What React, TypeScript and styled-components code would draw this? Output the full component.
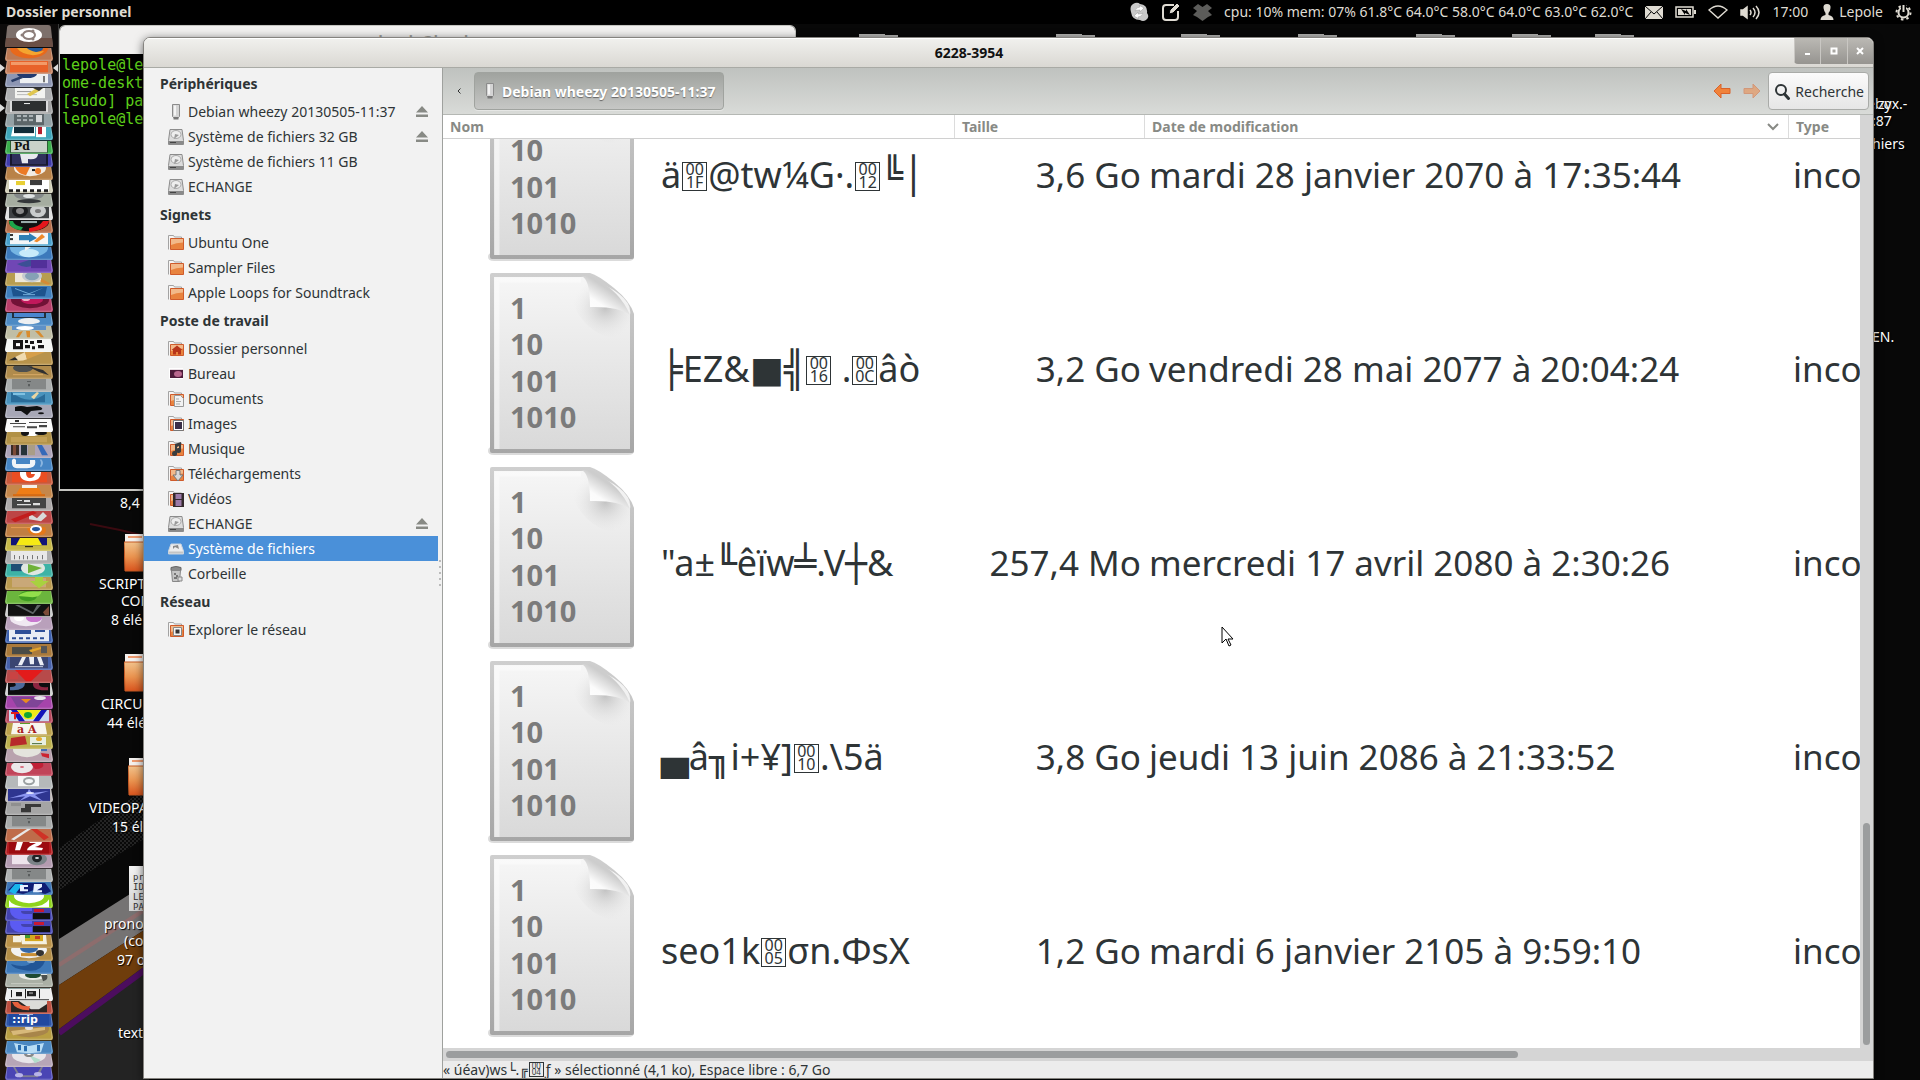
import React from 'react';
import styled, { createGlobalStyle, css } from 'styled-components';

const ui = `'Noto Sans', 'DejaVu Sans', sans-serif`;
const ink = '#2e3436';

const GlobalStyle = createGlobalStyle`
  *, *::before, *::after { box-sizing: border-box; }
  body { margin: 0; background: #080808; color: ${ink}; font-family: ${ui}; font-size: 14px; }
  button { font: inherit; color: inherit; border: 0; padding: 0; margin: 0; background: none; }
  ul { list-style: none; margin: 0; padding: 0; }
  svg { display: block; flex: none; }
`;

/* ---------- Screen ---------- */

const Screen = styled.div`
  height: 100vh;
  display: grid;
  grid-template-rows: 24px minmax(0, 1fr);
  overflow: hidden;
`;

const Panel = styled.header`
  background: #000;
  color: #dfdbd2;
  display: flex;
  align-items: center;
  justify-content: space-between;
  padding: 0 8px 0 6px;
  line-height: 24px;
`;

const PanelTitle = styled.strong`
  font-size: 14px;
`;

const Indicators = styled.div`
  display: flex;
  align-items: center;
  gap: 12px;
`;

const Indicator = styled.button`
  display: flex;
  align-items: center;
  gap: 5px;
  white-space: nowrap;
`;

const Stage = styled.main`
  display: grid;
  grid-template-columns: 59px minmax(0, 1fr);
  position: relative;
  min-height: 0;
  overflow: hidden;
`;

/* ---------- Launcher ---------- */

type Mark = [string, string];

const r = (x: number, y: number, w: number, h: number) => `M${x} ${y}h${w}v${h}h${-w}z`;
const o = (x: number, y: number, a: number, b: number) =>
  `M${x - a} ${y}a${a} ${b} 0 1 0 ${2 * a} 0a${a} ${b} 0 1 0 ${-2 * a} 0z`;

const drive: Mark[] = [['#858888', r(7, 0, 34, 10)], ['#5a5d5d', r(22, 2, 4, 1)], ['#5a5d5d', r(23, 5, 2, 2)]];

type Tile = { tint: string; marks: Mark[]; label?: [string, string, number, number, number] };

const tiles: Tile[] = [
  { tint: '#bd7a55', marks: [['#e8691c', o(24, 0, 19, 10)], ['#245a9c', o(26, 0, 12, 5)], ['#f4a530', 'M12 0q4 6 16 7q8 0 11-4l-8 1q-8-2-10-5z']] },
  { tint: '#c4805f', marks: [['#e8622a', r(5, 0, 38, 11)], ['#f39a68', r(6, 1, 36, 3)]] },
  { tint: '#8d96b3', marks: [['#eef0f2', r(15, 0, 28, 9)], ['#223a70', o(22, 0, 10, 4)], ['#2b3d66', 'M6 6l10-4 2 2-11 4z'], ['#777', r(38, 2, 2, 6)]] },
  { tint: '#b0b1b3', marks: [['#f3f3f1', r(10, 0, 30, 10)], ['#999', r(12, 3, 14, 1)], ['#bbb', r(12, 6, 20, 1)], ['#e0c64f', 'M22 6l10-6 4 2-11 6z'], ['#333', 'M28 0h10l-4 3z']] },
  { tint: '#a2a2a2', marks: [['#dcdcdc', r(5, 0, 38, 11)], ['#2d2f30', r(7, 0, 34, 10)], ['#eee', r(19, 2, 6, 1)]] },
  { tint: '#94a1a5', marks: [['#5c6669', r(9, 0, 30, 11)], ['#aab2b5', r(12, 1, 4, 2)], ['#aab2b5', r(18, 1, 4, 2)], ['#aab2b5', r(24, 1, 4, 2)], ['#aab2b5', r(12, 5, 4, 2)], ['#aab2b5', r(18, 5, 4, 2)], ['#aab2b5', r(24, 5, 4, 2)], ['#d6d9da', r(31, 1, 6, 7)]] },
  { tint: '#3fa6ba', marks: [['#fff', 'M6 9L8 0h22v9z'], ['#122c38', r(9, 0, 20, 6)], ['#fff', r(31, 0, 10, 10)], ['#b51f2c', r(33, 0, 4, 7)]] },
  { tint: '#3aae4c', marks: [['#2b5f33', r(5, 0, 38, 12)], ['#c9d2ca', r(6, 0, 36, 11)]], label: ['Pd', '#111', 9, 9, 11] },
  { tint: '#403cab', marks: [['#17172e', r(5, 0, 38, 12)], ['#30305c', r(7, 0, 34, 10)], ['#e8e8ee', 'M15 0h18q0 6-10 5v4h-6z']] },
  { tint: '#b98248', marks: [['#f2ece4', o(25, 1, 16, 8)], ['#ec7a25', 'M10 0h15l-4 8q-8-1-11-8z'], ['#ec7a25', o(33, 4, 3, 3)], ['#222', r(27, 2, 3, 2)]] },
  { tint: '#d2cfb8', marks: [['#fff', r(4, 0, 40, 11)], ['#3c3c3c', r(25, 0, 12, 5)], ['#e8cf35', r(11, 1, 9, 4)], ['#1b1b1b', 'M4 9h4v3H4zM11 9h4v3h-4zM18 9h4v3h-4zM25 9h4v3h-4zM32 9h4v3h-4zM39 9h4v3h-4z']] },
  { tint: '#a5ada0', marks: [['#84898a', o(24, 0, 15, 6)], ['#34383a', o(24, 7, 12, 2)], ['#dfe3e3', o(24, 2, 6, 2)]] },
  { tint: '#e0e0e0', marks: [['#3f4244', r(4, 0, 40, 11)], ['#1c1e1f', o(15, 4, 8, 6)], ['#c9cccc', o(33, 4, 8, 6)], ['#888', o(15, 4, 4, 3)], ['#777', o(33, 4, 3, 2)]] },
  { tint: '#b86f4b', marks: [['#111', o(24, 2, 20, 9)], ['#1da64b', 'M4 1q0 8 12 9l2-3q-9-1-10-6z'], ['#e6161b', 'M44 1q-1 8-20 11v-4q10-1 14-7z'], ['#9aa', r(16, 1, 16, 2)]] },
  { tint: '#48a0cc', marks: [['#f4f6f7', r(5, 0, 38, 11)], ['#333', r(5, 1, 3, 2)], ['#333', r(5, 5, 3, 2)], ['#2e7fb5', 'M14 2h10V0l8 5-8 4V7H14z'], ['#ef8a2b', 'M29 8l8-7 3 3-8 5z']] },
  { tint: '#3c79bb', marks: [['#75b5e3', o(24, 1, 19, 9)], ['#c8ebfa', o(24, 6, 10, 4)], ['#f0f0f0', 'M20 0h6l-6 4z']] },
  { tint: '#7047b5', marks: [['#3c4f95', 'M12 4l12-4h6v5q-10 4-18-1z'], ['#523099', r(26, 0, 16, 8)]] },
  { tint: '#b79d50', marks: [['#eee8d8', r(10, 0, 26, 9)], ['#c6cbd0', o(27, 3, 10, 6)], ['#85a1b5', o(27, 3, 7, 4)], ['#d48a35', 'M37 6l8 4-2 2-8-4z']] },
  { tint: '#3f7fbd', marks: [['#1d538d', 'M6 1h36l-2 9H8z'], ['#73aedb', 'M10 2l14 5 14-5-2 1-12 5L10 3z'], ['#73aedb', r(18, 8, 12, 1)]] },
  { tint: '#b93f6a', marks: [['#711236', o(25, 1, 19, 8)], ['#c1185b', o(27, 1, 11, 4)], ['#efb0c3', o(21, 0, 4, 2)]] },
  { tint: '#4d8ac4', marks: [['#222f3d', r(7, 0, 34, 5)], ['#4a86cf', r(9, 0, 30, 4)], ['#eef0f2', o(24, 8, 11, 3)]] },
  { tint: '#c0bea6', marks: [['#5f91c7', r(7, 0, 34, 4)], ['#fff', o(20, 2, 9, 2)], ['#d88c2f', 'M21 5h4v6h-3zM14 6l4-1-4 6h-3zM30 5h4l5 6h-3z']] },
  { tint: '#f4f6f4', marks: [['#161616', 'M8 1h10v9H8zM20 1h3v3h-3zM25 2h4v3h-4zM32 1h5v3h-5zM20 6h5v3h-5zM27 7h3v3h-3zM33 6h6v3h-6z'], ['#fff', r(11, 4, 4, 3)]] },
  { tint: '#b8934b', marks: [['#f0dbb0', 'M6 7L20 0l2 7q-8 3-16 0z'], ['#282828', 'M4 8l6-3 3 3z'], ['#d69f4a', 'M20 0h20l-18 7z']] },
  { tint: '#b08b4c', marks: [['#4c4f50', o(18, 2, 10, 4)], ['#2f2f30', 'M22 0l16 4 6 5-10-3z'], ['#d6a965', r(8, 8, 30, 1)]] },
  { tint: '#adb0b0', marks: drive },
  { tint: '#4a93bd', marks: [['#2a6b98', 'M6 0q18 14 34 2v8H6z'], ['#ead5a2', 'M26 5l6-5 2 1-5 6z'], ['#7fc1e2', r(8, 1, 12, 2)]] },
  { tint: '#a7a7b6', marks: [['#101112', 'M10 2q6-2 12 0l10-1q8 2 4 4l-10 1-4 4-6-4-6 0z'], ['#101112', o(36, 8, 3, 1)]] },
  { tint: '#fbfbfb', marks: [['#444', 'M5 4h16v1H5zM8 7h12v1H8zM24 3h18v1H24zM22 7h10v2H22zM34 6h8v2h-8z'], ['#333', r(10, 1, 4, 2)]] },
  { tint: '#b19146', marks: [['#fff', o(26, 1, 9, 3)], ['#141414', o(20, 1, 4, 3)], ['#141414', o(36, 1, 6, 2)], ['#c2a057', r(6, 5, 36, 5)]] },
  { tint: '#ada3b8', marks: [['#3a2c26', r(6, 0, 8, 10)], ['#7d4a37', r(8, 0, 3, 10)], ['#273338', r(16, 0, 6, 10)], ['#a99d87', r(23, 0, 7, 10)], ['#3669b9', 'M32 0l5-0 6 10h-6z']] },
  { tint: '#4685c4', marks: [['#f0f4f8', 'M7 2q2-3 4 0v4h14V2h5q2 8-8 8H12q-6 0-5-8z'], ['#8cb6e0', 'M36 1q4 4 0 8l-1-1q2-3 0-6z']] },
  { tint: '#c9593b', marks: [['#ea4e23', r(7, 0, 35, 10)], ['#fff', 'M15 0h6q0 6 4 6t5-4h-4V0h10q0 9-11 9T15 0z']] },
  { tint: '#c5874b', marks: [['#f4f0e8', r(17, 0, 15, 3)], ['#ef7d16', 'M15 3h19l3 6H11z'], ['#d86a10', r(8, 9, 32, 2)]] },
  { tint: '#aeaaaa', marks: [['#444', r(7, 0, 34, 10)], ['#ddd', 'M12 2h5v1h-5zM19 2h6v2h-6zM12 6h14v1H12zM28 5h7v2h-7z']] },
  { tint: '#bd4545', marks: [['#d9d9d9', 'M24 2l8 5 6-6 4 4-6 5-12-2z'], ['#c21d1d', 'M6 8l22-8 4 2-22 9z']] },
  { tint: '#c07e42', marks: [['#e3781a', 'M22 3h18q4 9-10 8-8-1-8-8z'], ['#fff', o(31, 5, 6, 4)], ['#26559f', o(31, 5, 4, 2)], ['#e59852', r(6, 3, 20, 1)]] },
  { tint: '#c7b949', marks: [['#111478', r(6, 0, 36, 7)], ['#f5e914', 'M15 0h18l4 7H11z'], ['#111', r(20, 8, 8, 1)]] },
  { tint: '#acacac', marks: [['#e8e8e8', r(6, 0, 36, 9)], ['#777', 'M9 4h1v4H9zM14 5h1v3h-1zM18 4h1v4h-1zM22 5h1v3h-1zM27 4h1v4h-1zM32 5h1v3h-1zM37 4h1v4h-1z']] },
  { tint: '#3db3a6', marks: [['#1f4e74', r(6, 0, 14, 7)], ['#dfe7e2', o(28, 4, 12, 7)], ['#6fb23a', 'M23 0l14 4-14 5z']] },
  { tint: '#bb9b50', marks: [['#c9a878', r(7, 1, 34, 9)], ['#a8d13f', 'M30 0h8v4h6l-10 7-9-7h5z']] },
  { tint: '#6bb53d', marks: [['#3f9a22', o(23, 5, 9, 5)], ['#92df4b', 'M13 5q6-6 20-4l4-1q-2 7-12 6z']] },
  { tint: '#c7c7c7', marks: [['#121212', r(3, 0, 42, 12)], ['#5f6466', 'M10 1l18 9 8-9h-4l-4 7L14 1z'], ['#7b4a38', 'M38 8l6-6v9h-4z']] },
  { tint: '#b9a0bb', marks: [['#f0e8f2', o(21, 1, 16, 8)], ['#c878cf', o(29, 1, 8, 4)], ['#fff', o(14, 1, 5, 3)]] },
  { tint: '#3b5fae', marks: [['#e8ecf4', 'M4 0h40v11H4z'], ['#2e4f98', 'M10 0h16v4H10zM30 0h10v2H30zM7 7h4v2H7zM14 7h4v2h-4zM21 7h4v2h-4zM28 7h4v2h-4zM35 7h4v2h-4z']] },
  { tint: '#ab7a3b', marks: [['#4a4b46', r(7, 3, 20, 7)], ['#e2a52c', 'M24 6l8-2 4-1v2l-10 3z'], ['#555', r(36, 2, 6, 7)]] },
  { tint: '#4761aa', marks: [['#3a4572', r(5, 0, 38, 11)], ['#eceef5', 'M17 0h4l-4 8h-4zM24 0h5v7h-4zM32 0h4l3 8h-4z'], ['#c9cfe6', r(10, 9, 28, 1)]] },
  { tint: '#b74a4a', marks: [['#e31b1b', 'M10 0h28L26 11h-5z'], ['#c94343', r(5, 2, 8, 7)]] },
  { tint: '#cfcfcf', marks: [['#0d0d0f', r(3, 0, 42, 12)], ['#4c6a9b', 'M10 0h10q0 8-15 7V4q8 0 5-4z'], ['#8c2540', 'M28 0h6q-1 5 9 4v3q-16 1-15-7z']] },
  { tint: '#a644ab', marks: [['#7f4597', 'M6 1h36l-10 10H12z'], ['#e7e2ea', o(35, 2, 6, 2)], ['#e98b20', 'M16 3l10 0-5 4z']] },
  { tint: '#b8475c', marks: [['#c9d8ef', r(4, 0, 40, 11)], ['#1414b8', 'M6 0h6l8 11h-6zM42 0h-6l-8 11h6z'], ['#f1e916', 'M12 0h24l-8 9h-8z'], ['#e01e1e', 'M6 2h8v2h-3v5H9V4H6z'], ['#10a532', o(23, 5, 4, 3)]] },
  { tint: '#bca14b', marks: [['#f7f5ee', 'M8 0h32l2 11H6z'], ['#5b9b2a', r(15, 0, 10, 1)]], label: ['a A', '#a81d1d', 12, 10, 11] },
  { tint: '#bdb14e', marks: [['#b72a2a', 'M6 2l14-2 2 8-17 2z'], ['#e7efe2', r(25, 1, 16, 8)], ['#e5a92b', o(34, 3, 3, 2)], ['#476b3a', r(27, 7, 10, 1)]] },
  { tint: '#b9a2ae', marks: [['#e4e4dd', o(22, 1, 14, 7)], ['#446fb5', r(36, 0, 6, 2)], ['#cc2430', 'M36 4l8 1v4l-7-2z']] },
  { tint: '#c14459', marks: [['#ece8ea', o(17, 4, 11, 6)], ['#d86a7c', o(17, 4, 2, 1)], ['#c02036', 'M26 0h12q2 6-8 6z']] },
  { tint: '#b5b9ba', marks: [['#f6f8f8', r(13, 0, 21, 10)], ['#9ba1a2', o(24, 5, 6, 4)], ['#f6f8f8', o(24, 5, 4, 2)]] },
  { tint: '#bcb6b6', marks: [['#2e3590', r(3, 0, 42, 12)], ['#8c96f0', 'M4 9l18-5 2-4 3 4 17-2-14 4 8 6-13-5-11 5 6-5z'], ['#dfe3ff', o(25, 4, 4, 1)]] },
  { tint: '#a5a5a5', marks: [['#383838', 'M20 2h16v3H26v5H16V6h4z'], ['#8f8f8f', r(6, 1, 10, 3)]] },
  { tint: '#a9abab', marks: drive },
  { tint: '#bf6c4a', marks: [['#e8e8e8', 'M6 10L22 0h4L9 11z'], ['#cf3226', 'M26 0l6-0 12 8-5 3z']] },
  { tint: '#b3191d', marks: [['#9c0b10', r(4, 0, 40, 12)], ['#fff', 'M12 0h6l-3 8h-5zM24 0h13q0 3-7 5l8 1-1 2H22q0-3 9-7h-6z']] },
  { tint: '#b49bb0', marks: [['#eee4ec', r(7, 0, 24, 9)], ['#7b8388', o(32, 4, 10, 6)], ['#1f2427', o(32, 3, 5, 4)], ['#d7dde0', o(32, 3, 2, 1)]] },
  { tint: '#b0b2b2', marks: drive },
  { tint: '#3c74b5', marks: [['#0f1c74', 'M3 8L10 1h30l6 8-6 3-12-4-10 4z'], ['#19b4ea', 'M4 9L10 2h8l-8 10z'], ['#e6efff', 'M15 3h8v2h-4v2h4v2h-8zM29 2h8v3l-5 3h5v2h-9z']] },
  { tint: '#8fd41c', marks: [['#fff', r(4, 0, 40, 12)], ['#8fd41c', 'M3 0h42v3q-5 9-21 9T3 4z'], ['#fff', o(24, 1, 15, 7)]] },
  { tint: '#4343ad', marks: [['#5b5bf2', 'M5 0h22v3H16q0 3 4 3h7v5H14Q4 9 5 0z'], ['#111', 'M28 5h17v6H28z'], ['#c81932', r(29, 1, 10, 3)]] },
  { tint: '#4343ad', marks: [['#5b5bf2', 'M5 0h22v3H16q0 3 4 3h7v5H14Q4 9 5 0z'], ['#111', 'M28 5h17v6H28z'], ['#c81932', r(29, 1, 10, 3)]] },
  { tint: '#bb9249', marks: [['#f4f0e0', 'M8 1l8-1v7H8zM15 0h26l1 9H17z'], ['#d4a81f', r(20, 0, 18, 6)], ['#3f9a32', r(20, 0, 5, 3)], ['#c43c1e', r(30, 1, 5, 3)]] },
  { tint: '#b48e48', marks: [['#f2f2f2', o(24, 2, 18, 8)], ['#3568a8', o(24, 0, 9, 5)], ['#c98f35', r(16, 5, 16, 3)], ['#333', o(35, 5, 4, 3)]] },
  { tint: '#3d78b8', marks: [['#225596', 'M6 3q16 5 22-3h12q-4 12-20 9-12-1-14-6z'], ['#8badcf', o(26, 0, 4, 2)]] },
  { tint: '#aab0a5', marks: [['#e9ece8', o(28, 1, 14, 5)], ['#1e4a33', o(28, 1, 8, 3)], ['#4c504d', 'M36 1h6q2 5-4 6z'], ['#c8ccc4', r(6, 9, 32, 1)]] },
  { tint: '#f0f0f0', marks: [['#8ba1a1', r(3, 0, 42, 1)], ['#222', 'M6 2h1v7H6zM20 1h1v9h-1zM34 1h1v9h-1zM11 4h6v4h-6zM22 3h9v5h-9zM4 11h40v1H4z'], ['#777', r(24, 4, 4, 2)]] },
  { tint: '#bd4f3f', marks: [['#2a2523', r(6, 0, 36, 11)], ['#dcdcd8', 'M14 0h28v3l-8 5h-8z'], ['#e65f3c', 'M7 1h6q3 5 12 4l-1 4Q10 9 7 1z']] },
  { tint: '#2d55a9', marks: [['#2149a0', r(4, 0, 40, 12)], ['#a9bbe0', r(14, 0, 14, 1)]], label: ['::rip', '#fff', 7, 9, 11] },
  { tint: '#b99e43', marks: [['#a8854a', o(24, 2, 20, 8)], ['#d8b97a', 'M6 4l34-4v3L8 8z'], ['#e5e0d8', o(24, 1, 4, 2)]] },
  { tint: '#4a87c1', marks: [['#b8ddf5', 'M9 2l15 3 15-3-3 9-12 1-12-1z'], ['#2a6db0', 'M13 4h3v5h-3zM19 5h3v5h-3zM32 4h3v6h-3z']] },
  { tint: '#b7a6b7', marks: [['#e8e6ea', o(24, 1, 17, 8)], ['#b2dccb', 'M24 1l12 5-6 3z'], ['#888', o(24, 0, 5, 3)], ['#fff', o(24, 0, 2, 1)]] },
  { tint: '#4a45b4', marks: [['#807f92', 'M10 0l5 8h16l5-8h2l-5 10H14L8 0z'], ['#b8b4e8', o(14, 8, 4, 2)], ['#b8b4e8', o(33, 7, 4, 2)]] },
];

const Launcher = styled.nav`
  display: flex;
  flex-direction: column;
  align-items: center;
  background: linear-gradient(#0d0b0b 0 76%, #1a1713 86%, #20150c 96%);
  border-right: 1px solid #3a3a3a;
  overflow: hidden;
`;

const DashButton = styled.button`
  height: 24px;
  width: 48px;
`;

const TileList = styled.ul`
  flex: 1;
  min-height: 0;
  display: flex;
  flex-direction: column;
  width: 100%;
`;

const TileRow = styled.li`
  flex: 1 1 0;
  min-height: 0;
  display: flex;
  align-items: center;
  justify-content: space-between;
`;

const TileButton = styled.button`
  height: 100%;
  width: 48px;
  svg { width: 100%; height: 100%; }
`;

const Pip = styled.span<{ $side: 'left' | 'right'; $on?: boolean }>`
  width: 5px;
  border: solid transparent;
  border-width: 4px 0;
  ${(p) => p.$side === 'left' && css`border-left: 5px solid ${p.$on ? '#dcdcdc' : 'transparent'};`}
  ${(p) => p.$side === 'right' && css`border-right: 5px solid ${p.$on ? '#dcdcdc' : 'transparent'};`}
`;

const TileArt = ({ tile }: { tile: Tile }) => (
  <svg viewBox="0 0 48 13" preserveAspectRatio="none" aria-hidden="true">
    <path d="M2 0h44l2 10q0 3-2 3H2q-2 0-2-3z" fill={tile.tint} />
    {tile.marks.map(([fill, d], i) => <path key={i} d={d} fill={fill} />)}
    {tile.label && (
      <text x={tile.label[2]} y={tile.label[3]} fill={tile.label[1]} fontSize={tile.label[4]} fontWeight="700"
        fontFamily={tile.label[0] === '::rip' ? 'DejaVu Sans, sans-serif' : 'DejaVu Serif, serif'}>{tile.label[0]}</text>
    )}
    <path d="M2 0L1 10q0 2 2 2h42q2 0 2-2L46 0" fill="none" stroke="#fff" strokeOpacity=".28" />
  </svg>
);

const LauncherBar = () => (
  <Launcher aria-label="Lanceur">
    <DashButton aria-label="Tableau de bord">
      <svg width="48" height="24" viewBox="0 0 48 24">
        <path d="M5 1h38q3 0 3 3l2 19H0L2 4q0-3 3-3z" fill="#7d706b" />
        <path d="M0 23h48l-1-9H1z" fill="#6b4f45" />
        <ellipse cx="24" cy="11" rx="13" ry="7" fill="#fff" />
        <ellipse cx="24" cy="11" rx="6" ry="4" fill="none" stroke="#8d7f7b" strokeWidth="2" />
        <circle cx="17" cy="11" r="1.5" fill="#8d7f7b" />
        <circle cx="28" cy="7" r="1.5" fill="#8d7f7b" />
        <circle cx="28" cy="15" r="1.5" fill="#8d7f7b" />
      </svg>
    </DashButton>
    <TileList>
      {tiles.map((tile, i) => (
        <TileRow key={i}>
          <Pip $side="left" $on={i === 1 || i === 4} />
          <TileButton aria-label={`Application ${i + 1}`}><TileArt tile={tile} /></TileButton>
          <Pip $side="right" $on={i === 1} />
        </TileRow>
      ))}
    </TileList>
  </Launcher>
);

/* ---------- Desktop ---------- */

const Desktop = styled.div`
  position: relative;
  overflow: hidden;
  background: #080808;
`;

const Wallpaper = styled.svg`
  position: absolute;
  left: 0;
  bottom: 0;
`;

const DesktopItem = styled.div<{ $x: number; $y: number }>`
  position: absolute;
  left: ${(p) => p.$x}px;
  top: ${(p) => p.$y}px;
  color: #fff;
  line-height: 18px;
  white-space: nowrap;
  text-shadow: 1px 1px 1px #000;
`;

const OrangeFolder = () => (
  <svg width="36" height="38" viewBox="0 0 36 38" aria-hidden="true">
    <defs>
      <linearGradient id="deskFolder" x1="0" y1="0" x2="0" y2="1">
        <stop offset="0" stopColor="#f2c38c" /><stop offset=".5" stopColor="#ea9450" /><stop offset="1" stopColor="#d9541e" />
      </linearGradient>
    </defs>
    <path d="M1 0h35v10H1z" fill="#f4f1ee" />
    <path d="M4 2h14v2H4z" fill="#ee9b70" />
    <path d="M0 8h36v29H1z" fill="url(#deskFolder)" stroke="#c75a25" />
  </svg>
);

const Note = styled.pre`
  position: absolute;
  left: 70px;
  top: 842px;
  margin: 0;
  width: 34px;
  height: 45px;
  padding: 6px 0 0 4px;
  background: linear-gradient(#f4f4f4, #d2d2d2);
  color: #333;
  font: 9px/10px 'DejaVu Sans Mono', monospace;
  overflow: hidden;
`;

const Tabs = styled.svg`
  position: absolute;
  left: 800px;
  top: 9px;
`;

/* ---------- Terminal ---------- */

const Terminal = styled.section`
  position: absolute;
  left: 0;
  top: 1px;
  width: 737px;
  height: 466px;
  border: 1px solid #c4c4c0;
  border-bottom-width: 2px;
  border-radius: 6px 6px 0 0;
  background: #000;
  overflow: hidden;
`;

const TerminalTitle = styled.div`
  height: 28px;
  padding-top: 6px;
  background: #f1f0ef;
  color: #a0a09c;
  font-weight: 700;
  line-height: 18px;
  text-align: center;
`;

const TerminalText = styled.pre`
  margin: 2px 0 0 2px;
  color: #5ed01a;
  font: 15px/18px 'DejaVu Sans Mono', monospace;
`;

/* ---------- File window ---------- */

const Window = styled.section`
  position: absolute;
  left: 143px;
  right: 46px;
  top: 13px;
  bottom: 1px;
  display: grid;
  grid-template-rows: 30px minmax(0, 1fr);
  border: 1px solid #85837f;
  border-radius: 7px 7px 0 0;
  background: #ececec;
  box-shadow: 0 2px 10px rgba(0, 0, 0, .6);
  overflow: hidden;
`;

const TitleBar = styled.header`
  display: grid;
  grid-template-columns: 1fr 79px;
  background: linear-gradient(#f1f1ee, #dad8d3);
  border-bottom: 1px solid #a9aaa5;
  box-shadow: inset 0 1px #fff;
`;

const WindowTitle = styled.h1`
  margin: 0;
  color: #111;
  font-size: 14px;
  line-height: 29px;
  text-align: center;
`;

const WindowButtons = styled.div`
  display: flex;
  height: 26px;
  border-radius: 0 0 0 4px;
  background: linear-gradient(#bbb9b4, #969490);
  overflow: hidden;
`;

const WindowButton = styled.button`
  flex: 1;
  display: grid;
  place-items: center;
  border-left: 1px solid #c9c7c3;
`;

const Body = styled.div`
  display: grid;
  grid-template-columns: 299px minmax(0, 1fr);
  min-height: 0;
`;

const Sidebar = styled.nav`
  position: relative;
  background: #f2f2f2;
  border-right: 1px solid #9fa19e;
  padding-right: 4px;
`;

const SideHeading = styled.h2`
  margin: 0;
  padding-left: 16px;
  font-size: 14px;
  line-height: 31px;
`;

const SideItem = styled.li<{ $active?: boolean }>`
  display: flex;
  align-items: center;
  justify-content: space-between;
  height: 25px;
  padding: 0 10px 0 24px;
  background: ${(p) => (p.$active ? '#4a90d9' : 'transparent')};
  color: ${(p) => (p.$active ? '#fff' : ink)};
`;

const SideLink = styled.a`
  display: flex;
  align-items: center;
  gap: 4px;
  color: inherit;
  text-decoration: none;
  white-space: nowrap;
`;

const Grip = styled.span`
  position: absolute;
  right: 1px;
  top: 492px;
  width: 2px;
  height: 26px;
  background: repeating-linear-gradient(#bbb 0 2px, transparent 2px 6px);
`;

const Content = styled.div`
  display: grid;
  grid-template-rows: 47px minmax(0, 1fr) 17px;
  min-width: 0;
  min-height: 0;
`;

const Toolbar = styled.div`
  display: flex;
  align-items: center;
  justify-content: space-between;
  padding: 0 4px 0 10px;
  background: linear-gradient(#bfc2bf, #d9dbd8);
  border-bottom: 1px solid #b5b8b4;
`;

const Group = styled.div<{ $gap: number }>`
  display: flex;
  align-items: center;
  gap: ${(p) => p.$gap}px;
`;

const PathBack = styled.button`
  width: 11px;
  height: 38px;
  display: grid;
  place-items: center;
`;

const PathButton = styled.button`
  display: flex;
  align-items: center;
  gap: 4px;
  height: 38px;
  padding: 0 8px 0 7px;
  border: 1px solid #a0a39f;
  border-radius: 4px;
  background: linear-gradient(#a0a39f, #c6c7c5);
  box-shadow: 0 1px #e6e7e5;
  color: #fff;
  font-weight: 700;
  text-shadow: 0 1px 1px #666;
`;

const SearchButton = styled.button`
  display: flex;
  align-items: center;
  gap: 4px;
  height: 38px;
  padding: 0 4px 0 5px;
  border: 1px solid #a9aba8;
  border-radius: 4px;
  background: linear-gradient(#fbfbfb, #e6e6e6);
`;

const Pane = styled.div`
  display: grid;
  grid-template-columns: minmax(0, 1fr) 13px;
  grid-template-rows: minmax(0, 1fr) 13px;
  min-height: 0;
  background: #d5d5d5;
`;

const Files = styled.table`
  display: grid;
  grid-template-rows: 24px minmax(0, 1fr);
  min-height: 0;
  background: #fff;
  overflow: hidden;
`;

const columns = css`
  display: grid;
  grid-template-columns: 511px 190px 1fr 72px;
`;

const Head = styled.thead`
  display: block;
`;

const HeadRow = styled.tr`
  ${columns}
  height: 24px;
  border-bottom: 1px solid #d0d0d0;
`;

const HeadCell = styled.th`
  padding: 0 9px 0 7px;
  border-left: 1px solid #dcdcdc;
  text-align: left;
  &:first-child { border-left: 0; }
`;

const SortButton = styled.button`
  display: flex;
  width: 100%;
  align-items: center;
  justify-content: space-between;
  color: #888a85;
  font-size: 14px;
  font-weight: 700;
  line-height: 23px;
`;

const Rows = styled.tbody`
  display: flex;
  flex-direction: column;
  justify-content: flex-end;
  min-height: 0;
  overflow: hidden;
`;

const Row = styled.tr`
  ${columns}
  flex: none;
  height: 194px;
  font-size: 35px;
  line-height: 48px;
  white-space: nowrap;
`;

const Cell = styled.td<{ $end?: boolean }>`
  display: flex;
  align-items: center;
  justify-content: ${(p) => (p.$end ? 'flex-end' : 'flex-start')};
  padding: 0 3px 0 5px;
  overflow: hidden;
`;

const NameCell = styled(Cell)`
  padding: 0 0 0 42px;
  gap: 24px;
  font-size: 36px;
`;

const Hex = styled.span<{ $small?: boolean }>`
  display: inline-block;
  width: ${(p) => (p.$small ? 15 : 25)}px;
  margin: 0 1px;
  padding-bottom: 1px;
  border: 1px solid currentColor;
  font-size: ${(p) => (p.$small ? 8 : 16)}px;
  line-height: ${(p) => (p.$small ? 6 : 13)}px;
  text-align: center;
`;

const HexGlyph = ({ code, small }: { code: string; small?: boolean }) => (
  <Hex $small={small}>{code.slice(0, 2)}<br />{code.slice(2)}</Hex>
);

const VTrack = styled.div`
  display: flex;
  flex-direction: column;
  justify-content: flex-end;
  align-items: center;
  padding: 3px 0;
`;

const VThumb = styled.div`
  width: 7px;
  height: 24%;
  border-radius: 4px;
  background: #9b9d9e;
`;

const HTrack = styled.div`
  display: flex;
  align-items: center;
  padding: 0 3px;
`;

const HThumb = styled.div`
  width: 76%;
  height: 7px;
  border-radius: 4px;
  background: #9b9d9e;
`;

const Status = styled.footer`
  background: #ececec;
  line-height: 17px;
  white-space: nowrap;
`;

const Pointer = styled.svg`
  position: absolute;
  left: 1221px;
  top: 602px;
`;

/* ---------- Icons ---------- */

const Usb = () => (
  <svg width="16" height="16" viewBox="0 0 16 16" aria-hidden="true">
    <path d="M4.500.5h7v12l-1 1h-5l-1-1z" fill="#d4d4d4" stroke="#8b8b8b" />
    <path d="M6 1.500h2v10H6z" fill="#f4f4f4" />
    <path d="M5.500 13h5v2.500h-5z" fill="#777" />
  </svg>
);

const Disk = () => (
  <svg width="16" height="16" viewBox="0 0 16 16" aria-hidden="true">
    <path d="M2 .5h12l1.500 11v4H.5v-4z" fill="#dcdcdc" stroke="#8c8c8c" />
    <path d="M1 12h14v3H1z" fill="#8a8a8a" />
    <path d="M2 13.500h6" stroke="#444" />
    <ellipse cx="8" cy="5.500" rx="5" ry="4" fill="#eee" stroke="#aaa" />
    <path d="M7 5l4 1-5 4z" fill="#999" />
  </svg>
);

const FlatDisk = () => (
  <svg width="16" height="16" viewBox="0 0 16 16" aria-hidden="true">
    <path d="M3 3h10l2.500 7v3H.5v-3z" fill="#ececec" stroke="#c9d3de" />
    <path d="M1 10.500h14v2H1z" fill="#c4c4c4" />
    <path d="M5 5l5-1 1 4-4-2-2 2z" fill="#888" />
  </svg>
);

const Bin = () => (
  <svg width="16" height="16" viewBox="0 0 16 16" aria-hidden="true">
    <path d="M3 1.500q5-2 10 0v3H3z" fill="#8a8a8a" stroke="#666" />
    <path d="M3.500 4.500h9l-1 11h-7z" fill="#c6c6c6" stroke="#888" />
    <path d="M6 7h2v2H6zM8 9h2v2H8zM6 11h3v2H6z" fill="#777" />
    <path d="M10 11h4v4h-4z" fill="#ddd" stroke="#888" />
  </svg>
);

const Screenlet = () => (
  <svg width="16" height="16" viewBox="0 0 16 16" aria-hidden="true">
    <path d="M1 2h14v11H1z" fill="#fff" />
    <path d="M2 3h13v9H2z" fill="#4d1c3b" />
    <path d="M2 3h13v1H2z" fill="#e8dfe4" />
    <ellipse cx="10" cy="8" rx="4" ry="3" fill="#b8688e" />
  </svg>
);

const overlays: Record<string, React.ReactNode> = {
  home: <path d="M9 4.500L3.500 9H5v4.500h3V11h2v2.500h3V9h1.500z" fill="#b8351a" />,
  docs: <g><path d="M6.500 4.500h6l3 3v8h-9z" fill="#f2f2f2" stroke="#999" /><path d="M8 8h3M8 10.500h5M8 13h4" stroke="#aaa" /></g>,
  images: <g><path d="M5.500 4.500h10v10h-10z" fill="#fff" stroke="#777" /><path d="M7 6h7v7H7z" fill="#3a3048" /></g>,
  music: <path d="M7 3l6-2v8a2.500 2.500 0 1 1-2-2V5L9 6v6a2.500 2.500 0 1 1-2-2z" fill="#3a3d3e" />,
  down: <path d="M8 4.500h4V9h3l-5 6-5-6h3z" fill="#d8d8d8" stroke="#777" />,
  video: <g><path d="M5 2h11v14H5z" fill="#33292c" /><path d="M7.500 3h6v5h-6zM7.500 9h6v6h-6z" fill="#9b7aa8" /></g>,
  net: <g><path d="M5.500 5.500h8v8h-8z" fill="#f4f4f4" stroke="#888" /><path d="M7.500 7.500h4v4h-4z" fill="#333" /></g>,
};

const Folder = ({ kind }: { kind?: string }) => (
  <svg width="16" height="16" viewBox="0 0 16 16" aria-hidden="true">
    <path d="M.5 14.500V.5h5l1 1.500h7v3" fill="#f6f5f4" stroke="#a3a3a3" />
    <path d="M2.500 3.500h13v11h-13z" fill="#e8833f" stroke="#cf5b2b" />
    <path d="M3 4h12v3.500Q8 7.500 3 10z" fill="#f2b98a" />
    {kind && overlays[kind]}
  </svg>
);

const Eject = () => (
  <svg width="12" height="11" viewBox="0 0 12 11"><path d="M6 0l6 6.500H0zM0 8.500h12v2.500H0z" fill="#888a85" /></svg>
);

const Arrow = ({ flip }: { flip?: boolean }) => (
  <svg width="18" height="16" viewBox="0 0 18 16" opacity={flip ? 0.5 : 1} aria-hidden="true">
    <path transform={flip ? 'matrix(-1 0 0 1 18 0)' : undefined}
      d="M1 8l7-7v4.500h9v5H8V15z" fill="#f0823a" stroke="#d9622a" strokeLinejoin="round" />
  </svg>
);

const BinaryFile = () => (
  <svg width="152" height="194" viewBox="0 0 152 194" role="img" aria-label="Fichier binaire">
    <defs>
      <linearGradient id="paper" x1="0" y1="0" x2="0" y2="1">
        <stop offset="0" stopColor="#f6f6f6" /><stop offset="1" stopColor="#d9d9d9" />
      </linearGradient>
      <linearGradient id="edge" x1="0" y1="0" x2="0" y2="1">
        <stop offset="0" stopColor="#cfcfcf" /><stop offset="1" stopColor="#a6a6a6" />
      </linearGradient>
      <linearGradient id="curl" x1="0" y1="1" x2=".55" y2=".35">
        <stop offset="0" stopColor="#fff" /><stop offset=".55" stopColor="#fbfbfb" /><stop offset="1" stopColor="#cdcdcd" />
      </linearGradient>
      <radialGradient id="shade" cx=".62" cy=".5" r=".5">
        <stop offset="0" stopColor="#a4a4a4" stopOpacity=".6" /><stop offset="1" stopColor="#e4e4e4" stopOpacity="0" />
      </radialGradient>
    </defs>
    <path d="M3 179q0-4 4-4h138q4 0 4 4t-6 4H9q-6 0-6-4z" fill="#000" opacity=".14" />
    <path d="M7 1h98q8 2 24 15t20 26v137q0 2-2 2H7q-2 0-2-2V3q0-2 2-2z" fill="url(#edge)" />
    <path d="M9 5h92q48 18 44 38v134H9z" fill="url(#paper)" />
    <path d="M12 177V8h84" fill="none" stroke="#fff" strokeWidth="5" opacity=".45" />
    <path d="M80 5h20l45 38v24Q92 70 80 5z" fill="url(#shade)" />
    <path d="M96 4q9 2 9 31 28-1 40 8Q135 19 108 5q-4-1-12-1z" fill="url(#curl)" />
    <g fill="#7b7b7b" fontFamily="Noto Sans, sans-serif" fontWeight="700" fontSize="29">
      <text x="25" y="47">1</text><text x="25" y="83">10</text><text x="25" y="120">101</text><text x="25" y="156">1010</text>
    </g>
  </svg>
);

/* ---------- Data ---------- */

type Place = { icon: React.ReactNode; name: string; eject?: boolean; active?: boolean };

const places: { title: string; items: Place[] }[] = [
  { title: 'Périphériques', items: [
    { icon: <Usb />, name: 'Debian wheezy 20130505-11:37', eject: true },
    { icon: <Disk />, name: 'Système de fichiers 32 GB', eject: true },
    { icon: <Disk />, name: 'Système de fichiers 11 GB' },
    { icon: <Disk />, name: 'ECHANGE' },
  ] },
  { title: 'Signets', items: [
    { icon: <Folder />, name: 'Ubuntu One' },
    { icon: <Folder />, name: 'Sampler Files' },
    { icon: <Folder />, name: 'Apple Loops for Soundtrack' },
  ] },
  { title: 'Poste de travail', items: [
    { icon: <Folder kind="home" />, name: 'Dossier personnel' },
    { icon: <Screenlet />, name: 'Bureau' },
    { icon: <Folder kind="docs" />, name: 'Documents' },
    { icon: <Folder kind="images" />, name: 'Images' },
    { icon: <Folder kind="music" />, name: 'Musique' },
    { icon: <Folder kind="down" />, name: 'Téléchargements' },
    { icon: <Folder kind="video" />, name: 'Vidéos' },
    { icon: <Disk />, name: 'ECHANGE', eject: true },
    { icon: <FlatDisk />, name: 'Système de fichiers', active: true },
    { icon: <Bin />, name: 'Corbeille' },
  ] },
  { title: 'Réseau', items: [{ icon: <Folder kind="net" />, name: 'Explorer le réseau' }] },
];

const files: { name: React.ReactNode; size: string; date: string }[] = [
  { name: <>ä<HexGlyph code="001F" />@tw¼G·.<HexGlyph code="0012" />╚│</>, size: '3,6 Go', date: 'mardi 28 janvier 2070 à 17:35:44' },
  { name: <>╞EZ&amp;■╣<HexGlyph code="0016" /> .<HexGlyph code="000C" />âò</>, size: '3,2 Go', date: 'vendredi 28 mai 2077 à 20:04:24' },
  { name: <>"a±╙êïw╧.V┼&amp;</>, size: '257,4 Mo', date: 'mercredi 17 avril 2080 à 2:30:26' },
  { name: <>▄â╖i+¥]<HexGlyph code="0010" />.\5ä</>, size: '3,8 Go', date: 'jeudi 13 juin 2086 à 21:33:52' },
  { name: <>seo1k<HexGlyph code="0005" />σn.ΦsX</>, size: '1,2 Go', date: 'mardi 6 janvier 2105 à 9:59:10' },
];

/* ---------- Page ---------- */

const TopPanel = () => (
  <Panel>
    <PanelTitle>Dossier personnel</PanelTitle>
    <Indicators>
      <Indicator aria-label="Skype">
        <svg width="20" height="20" viewBox="0 0 20 20"><path d="M6 1q3-1 5 1 8 1 7 9 3 4-1 7-3 2-6 0-8 0-9-8Q0 3 6 1z" fill="#c9c9c9" /><path d="M6 9q1-4 5-4l-1-2 5 3-4 4V8q-3 0-5 1zM14 11q-1 4-5 4l1 2-5-3 4-4v2q3 0 5-1z" fill="#fff" stroke="#999" strokeWidth=".5" /></svg>
      </Indicator>
      <Indicator aria-label="Notes">
        <svg width="20" height="20" viewBox="0 0 20 20" fill="none" stroke="#dfdbd2" strokeWidth="2"><path d="M13 3H5Q2 3 2 6v9q0 3 3 3h9q3 0 3-3V9" /><path d="M8 12l1-4 7-7 3 3-7 7z" fill="#dfdbd2" stroke="#000" strokeWidth="1" /></svg>
      </Indicator>
      <Indicator aria-label="Dropbox">
        <svg width="19" height="18" viewBox="0 0 19 18" fill="#5c5c5a"><path d="M5 1l4.500 3L14 1l5 4-4 3 4 4-4 2-5.500 4L4 14l-4-2 4-4-4-3z" /></svg>
      </Indicator>
      <span>cpu: 10% mem: 07% 61.8°C 64.0°C 58.0°C 64.0°C 63.0°C 62.0°C</span>
      <Indicator aria-label="Messages">
        <svg width="18" height="13" viewBox="0 0 18 13"><path d="M0 0h18v13H0z" fill="#dfdbd2" /><path d="M0 0l9 8 9-8M0 13l6-7M18 13l-6-7" fill="none" stroke="#000" /></svg>
      </Indicator>
      <Indicator aria-label="Batterie">
        <svg width="21" height="12" viewBox="0 0 21 12"><path d="M1 1h17v10H1z" fill="none" stroke="#dfdbd2" strokeWidth="1.500" /><path d="M3 3h13v6H3z" fill="#dfdbd2" /><path d="M19 4h2v4h-2z" fill="#dfdbd2" /><path d="M6 3l5 2v-2l4 6-5-2v2z" fill="#000" /></svg>
      </Indicator>
      <Indicator aria-label="Réseau sans fil">
        <svg width="20" height="14" viewBox="0 0 20 14"><path d="M1 5q9-8 18 0l-9 8z" fill="none" stroke="#dfdbd2" strokeWidth="1.500" /></svg>
      </Indicator>
      <Indicator aria-label="Volume">
        <svg width="20" height="15" viewBox="0 0 20 15" fill="none" stroke="#dfdbd2" strokeWidth="1.500"><path d="M1 5h2l4-3v11l-4-3H1z" fill="#dfdbd2" /><path d="M10 5q2 2.500 0 5M13 3q4 4.500 0 9M16 1q6 6.500 0 13" /></svg>
      </Indicator>
      <Indicator>17:00</Indicator>
      <Indicator>
        <svg width="14" height="16" viewBox="0 0 14 16" fill="#dfdbd2"><path d="M7 0q4 0 3.500 4T8.500 9v2q5 1 5 5H.5q0-4 5-5V9Q4 7 3.500 4 3 0 7 0z" /></svg>
        Lepole
      </Indicator>
      <Indicator aria-label="Session">
        <svg width="17" height="17" viewBox="0 0 17 17" fill="none" stroke="#dfdbd2"><circle cx="8.500" cy="8.500" r="5" strokeWidth="2" /><circle cx="8.500" cy="8.500" r="7" strokeWidth="2" strokeDasharray="2.500 3" /><path d="M8.500 0v8" stroke="#000" strokeWidth="5" /><path d="M8.500 1v7" strokeWidth="2" /></svg>
      </Indicator>
    </Indicators>
  </Panel>
);

const DesktopArea = () => (
  <Desktop>
    <Wallpaper width="90" height="560" viewBox="59 520 90 560" aria-hidden="true">
      <defs>
        <pattern id="mesh" width="4" height="4" patternUnits="userSpaceOnUse"><path d="M0 0h2v2H0zM2 2h2v2H2z" fill="#242424" /></pattern>
      </defs>
      <path d="M90 524l30 6 29 7" stroke="#3a0a10" strokeWidth="2" fill="none" />
      <path d="M59 848l90-62v50l-90 54z" fill="url(#mesh)" />
      <path d="M59 939l90-57v45l-90 58z" fill="#757373" />
      <path d="M59 965l90-58" stroke="#8d6d6d" strokeWidth="4" />
      <path d="M59 985l90-58v37l-90 66z" fill="#6f3d0c" />
      <path d="M59 1029l90-66v117H59z" fill="#232323" />
      <path d="M59 1033l90-66" stroke="#4c0d5e" strokeWidth="6" />
    </Wallpaper>
    <Tabs width="790" height="6" viewBox="0 0 790 6" aria-hidden="true">
      {[0, 197, 322, 439, 557, 653, 736].map((x) => (
        <path key={x} d={`M${x} 1h26v1h13v4h-39z`} fill="#b4b4b2" />
      ))}
    </Tabs>
    <DesktopItem $x={61} $y={470}>8,4</DesktopItem>
    <DesktopItem $x={65} $y={510}><OrangeFolder /></DesktopItem>
    <DesktopItem $x={40} $y={551}>SCRIPT</DesktopItem>
    <DesktopItem $x={62} $y={568}>CON</DesktopItem>
    <DesktopItem $x={52} $y={587}>8 élé</DesktopItem>
    <DesktopItem $x={65} $y={630}><OrangeFolder /></DesktopItem>
    <DesktopItem $x={42} $y={671}>CIRCU</DesktopItem>
    <DesktopItem $x={48} $y={690}>44 élé</DesktopItem>
    <DesktopItem $x={69} $y={734}><OrangeFolder /></DesktopItem>
    <DesktopItem $x={30} $y={775}>VIDEOPA</DesktopItem>
    <DesktopItem $x={53} $y={794}>15 élé</DesktopItem>
    <Note>{'pr\nID\nLE\nPA'}</Note>
    <DesktopItem $x={45} $y={891}>prono</DesktopItem>
    <DesktopItem $x={65} $y={908}>(co</DesktopItem>
    <DesktopItem $x={58} $y={927}>97 o</DesktopItem>
    <DesktopItem $x={59} $y={1000}>text</DesktopItem>
    <DesktopItem $x={1808} $y={71}>ebox.-</DesktopItem>
    <DesktopItem $x={1819} $y={71}>zy</DesktopItem>
    <DesktopItem $x={1813} $y={88}>:87</DesktopItem>
    <DesktopItem $x={1813} $y={111}>hiers</DesktopItem>
    <DesktopItem $x={1813} $y={304}>EN.</DesktopItem>
    <Terminal>
      <TerminalTitle>lepole@lepole</TerminalTitle>
      <TerminalText>{'lepole@le\nome-deskt\n[sudo] pa\nlepole@le'}</TerminalText>
    </Terminal>
  </Desktop>
);

const FileWindow = () => (
  <Window>
    <TitleBar>
      <WindowTitle>6228-3954</WindowTitle>
      <WindowButtons>
        <WindowButton aria-label="Réduire"><svg width="8" height="8" viewBox="0 0 8 8"><path d="M1 6h5v2H1z" fill="#fff" /></svg></WindowButton>
        <WindowButton aria-label="Agrandir"><svg width="8" height="8" viewBox="0 0 8 8"><path d="M1.500 1.500h5v5h-5z" fill="none" stroke="#fff" strokeWidth="2" /></svg></WindowButton>
        <WindowButton aria-label="Fermer"><svg width="8" height="8" viewBox="0 0 8 8"><path d="M1 1l6 6M7 1L1 7" stroke="#fff" strokeWidth="2" /></svg></WindowButton>
      </WindowButtons>
    </TitleBar>
    <Body>
      <Sidebar aria-label="Emplacements">
        {places.map((group) => (
          <React.Fragment key={group.title}>
            <SideHeading>{group.title}</SideHeading>
            <ul>
              {group.items.map((p) => (
                <SideItem key={p.name} $active={p.active}>
                  <SideLink href="#">{p.icon}{p.name}</SideLink>
                  {p.eject && <button aria-label={`Éjecter ${p.name}`}><Eject /></button>}
                </SideItem>
              ))}
            </ul>
          </React.Fragment>
        ))}
        <Grip />
      </Sidebar>
      <Content>
        <Toolbar>
          <Group $gap={10}>
            <PathBack aria-label="Dossiers précédents">
              <svg width="4" height="6" viewBox="0 0 4 6"><path d="M3.500.5L1 3l2.500 2.500" fill="none" stroke="#333" /></svg>
            </PathBack>
            <PathButton><Usb />Debian wheezy 20130505-11:37</PathButton>
          </Group>
          <Group $gap={7}>
            <Group $gap={12}>
              <button aria-label="Précédent"><Arrow /></button>
              <button aria-label="Suivant"><Arrow flip /></button>
            </Group>
            <SearchButton>
              <svg width="17" height="17" viewBox="0 0 17 17" fill="none" stroke="#2e3436"><circle cx="7" cy="7" r="5" strokeWidth="2" /><path d="M10.500 11l4 4.500" strokeWidth="3" strokeLinecap="round" /></svg>
              Recherche
            </SearchButton>
          </Group>
        </Toolbar>
        <Pane>
          <Files>
            <Head>
              <HeadRow>
                <HeadCell scope="col"><SortButton>Nom</SortButton></HeadCell>
                <HeadCell scope="col"><SortButton>Taille</SortButton></HeadCell>
                <HeadCell scope="col">
                  <SortButton>Date de modification
                    <svg width="12" height="8" viewBox="0 0 12 8"><path d="M1 1l5 5 5-5" fill="none" stroke="#888a85" strokeWidth="2" /></svg>
                  </SortButton>
                </HeadCell>
                <HeadCell scope="col"><SortButton>Type</SortButton></HeadCell>
              </HeadRow>
            </Head>
            <Rows>
              {files.map((f) => (
                <Row key={f.date}>
                  <NameCell><BinaryFile /><span>{f.name}</span></NameCell>
                  <Cell $end>{f.size}</Cell>
                  <Cell>{f.date}</Cell>
                  <Cell>inco</Cell>
                </Row>
              ))}
            </Rows>
          </Files>
          <VTrack><VThumb /></VTrack>
          <HTrack><HThumb /></HTrack>
        </Pane>
        <Status>« úéav)ws└.╔<HexGlyph code="0004" small />ƒ » sélectionné (4,1 ko), Espace libre : 6,7 Go</Status>
      </Content>
    </Body>
  </Window>
);

const App = () => (
  <>
    <GlobalStyle />
    <Screen>
      <TopPanel />
      <Stage>
        <LauncherBar />
        <DesktopArea />
        <FileWindow />
        <Pointer width="13" height="21" viewBox="0 0 13 21" aria-hidden="true">
          <path d="M1 1v16l4-4 3 7 2-1-3-6h5z" fill="#fff" stroke="#000" />
        </Pointer>
      </Stage>
    </Screen>
  </>
);

export default App;
